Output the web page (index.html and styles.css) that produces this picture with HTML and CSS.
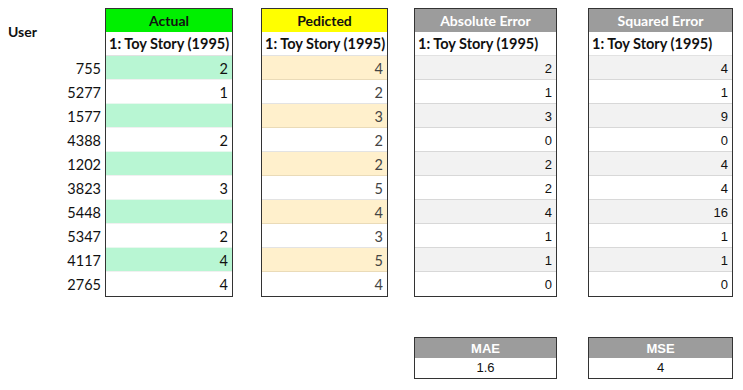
FILE: index.html
```html
<!DOCTYPE html>
<html>
<head>
<meta charset="utf-8">
<link rel="stylesheet" href="styles.css">
</head>
<body>
<div class="sheet">
  <div class="users">
    <div class="user-label">User</div>
    <div class="uid">755</div>
    <div class="uid">5277</div>
    <div class="uid">1577</div>
    <div class="uid">4388</div>
    <div class="uid">1202</div>
    <div class="uid">3823</div>
    <div class="uid">5448</div>
    <div class="uid">5347</div>
    <div class="uid">4117</div>
    <div class="uid">2765</div>
  </div>

  <div class="tbl actual">
    <div class="hd">Actual</div>
    <div class="title">1: Toy Story (1995)</div>
    <div class="row alt">2</div>
    <div class="row">1</div>
    <div class="row alt"></div>
    <div class="row">2</div>
    <div class="row alt"></div>
    <div class="row">3</div>
    <div class="row alt"></div>
    <div class="row">2</div>
    <div class="row alt">4</div>
    <div class="row last">4</div>
  </div>

  <div class="tbl pred">
    <div class="hd">Pedicted</div>
    <div class="title">1: Toy Story (1995)</div>
    <div class="row alt">4</div>
    <div class="row">2</div>
    <div class="row alt">3</div>
    <div class="row">2</div>
    <div class="row alt">2</div>
    <div class="row">5</div>
    <div class="row alt">4</div>
    <div class="row">3</div>
    <div class="row alt">5</div>
    <div class="row last">4</div>
  </div>

  <div class="tbl err abs">
    <div class="hd">Absolute Error</div>
    <div class="title">1: Toy Story (1995)</div>
    <div class="row alt">2</div>
    <div class="row">1</div>
    <div class="row alt">3</div>
    <div class="row">0</div>
    <div class="row alt">2</div>
    <div class="row">2</div>
    <div class="row alt">4</div>
    <div class="row">1</div>
    <div class="row alt">1</div>
    <div class="row last">0</div>
  </div>

  <div class="tbl err sq">
    <div class="hd">Squared Error</div>
    <div class="title">1: Toy Story (1995)</div>
    <div class="row alt">4</div>
    <div class="row">1</div>
    <div class="row alt">9</div>
    <div class="row">0</div>
    <div class="row alt">4</div>
    <div class="row">4</div>
    <div class="row alt">16</div>
    <div class="row">1</div>
    <div class="row alt">1</div>
    <div class="row last">0</div>
  </div>

  <div class="stat mae">
    <div class="stat-hd">MAE</div>
    <div class="stat-val">1.6</div>
  </div>
  <div class="stat mse">
    <div class="stat-hd">MSE</div>
    <div class="stat-val">4</div>
  </div>
</div>
</body>
</html>
```

FILE: styles.css
```css
html, body {
  margin: 0;
  padding: 0;
  background: #ffffff;
}

.sheet {
  display: grid;
  grid-template-columns: 105px 128px 28px 127px 26px 143px 31px 145px;
  grid-template-rows: auto auto;
  padding-top: 8px;
  font-family: Lato, "Open Sans", sans-serif;
  color: #111;
}

.users {
  grid-column: 1;
  grid-row: 1;
  display: flex;
  flex-direction: column;
}

.user-label {
  height: 48px;
  display: flex;
  align-items: center;
  padding-left: 8px;
  padding-bottom: 1px;
  box-sizing: border-box;
  font-weight: bold;
  font-size: 14px;
}

.uid {
  height: 24px;
  line-height: 26px;
  text-align: right;
  padding-right: 4px;
  font-size: 14.5px;
}

.tbl {
  border: 1px solid #333;
  display: flex;
  flex-direction: column;
}

.actual { grid-column: 2; grid-row: 1; }
.pred { grid-column: 4; grid-row: 1; }
.abs { grid-column: 6; grid-row: 1; }
.sq { grid-column: 8; grid-row: 1; }

.hd {
  height: 23px;
  line-height: 23px;
  text-align: center;
  font-weight: bold;
  font-size: 14px;
}

.actual .hd { background: #00f000; }
.pred .hd { background: #ffff00; }
.err .hd { background: #9c9c9c; color: #ffffff; }

.title {
  height: 24px;
  line-height: 24px;
  padding-left: 3px;
  font-weight: bold;
  font-size: 14.5px;
  white-space: nowrap;
  border-bottom: 1px solid #e2e2e2;
  box-sizing: border-box;
}

.row {
  height: 24px;
  box-sizing: border-box;
  line-height: 25px;
  text-align: right;
  padding-right: 4px;
  font-size: 14.5px;
  border-bottom: 1px solid #e3e3e3;
  background: #fff;
}

.row.last { border-bottom: none; }

.actual .row.alt { background: #b8f6d3; border-bottom-color: #f0f0f0; }
.actual .row { border-bottom-color: #e8f8ef; }
.pred .row.alt { background: #fff0cc; border-bottom-color: #eadbb8; }
.pred .row { color: #444; }

.err .row {
  font-family: "Liberation Sans", Arial, sans-serif;
  font-size: 13px;
  color: #111;
  border-bottom-color: #d8d8d8;
}
.err .row.alt { background: #f2f2f2; }
.err .row.last { border-bottom: none; }

.stat {
  grid-row: 2;
  margin-top: 40px;
  border: 1px solid #333;
  font-family: "Liberation Sans", Arial, sans-serif;
  font-size: 13px;
  text-align: center;
}
.mae { grid-column: 6; }
.mse { grid-column: 8; }

.stat-hd {
  height: 20px;
  line-height: 21px;
  background: #9c9c9c;
  color: #fff;
  font-weight: bold;
}

.stat-val {
  height: 20px;
  line-height: 20px;
  color: #111;
}
```
